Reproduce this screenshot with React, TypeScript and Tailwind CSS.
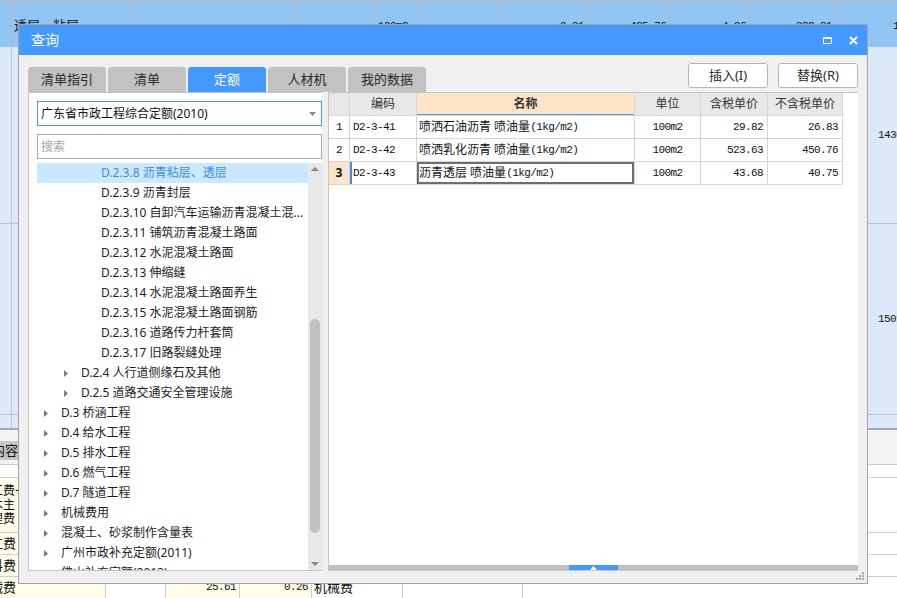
import React from "react";

const UI = "font-['Noto_Sans','Noto_Sans_CJK_SC',sans-serif]";
const MONO = "font-['Liberation_Mono','Noto_Sans_CJK_SC',monospace] text-[11px] tracking-[-0.6px]";

type Node = { lvl: 1 | 2 | 3; t: string; sel?: boolean };
const tree: Node[] = [
  { lvl: 3, t: "D.2.3.8 沥青粘层、透层", sel: true },
  { lvl: 3, t: "D.2.3.9 沥青封层" },
  { lvl: 3, t: "D.2.3.10 自卸汽车运输沥青混凝土混..." },
  { lvl: 3, t: "D.2.3.11 铺筑沥青混凝土路面" },
  { lvl: 3, t: "D.2.3.12 水泥混凝土路面" },
  { lvl: 3, t: "D.2.3.13 伸缩缝" },
  { lvl: 3, t: "D.2.3.14 水泥混凝土路面养生" },
  { lvl: 3, t: "D.2.3.15 水泥混凝土路面钢筋" },
  { lvl: 3, t: "D.2.3.16 道路传力杆套筒" },
  { lvl: 3, t: "D.2.3.17 旧路裂缝处理" },
  { lvl: 2, t: "D.2.4 人行道侧缘石及其他" },
  { lvl: 2, t: "D.2.5 道路交通安全管理设施" },
  { lvl: 1, t: "D.3 桥涵工程" },
  { lvl: 1, t: "D.4 给水工程" },
  { lvl: 1, t: "D.5 排水工程" },
  { lvl: 1, t: "D.6 燃气工程" },
  { lvl: 1, t: "D.7 隧道工程" },
  { lvl: 1, t: "机械费用" },
  { lvl: 1, t: "混凝土、砂浆制作含量表" },
  { lvl: 1, t: "广州市政补充定额(2011)" },
  { lvl: 1, t: "佛山补充定额(2013)" },
];

const rows = [
  { n: "1", code: "D2-3-41", name: "喷洒石油沥青 喷油量", paren: "(1kg/m2)", unit: "100m2", p1: "29.82", p2: "26.83" },
  { n: "2", code: "D2-3-42", name: "喷洒乳化沥青 喷油量", paren: "(1kg/m2)", unit: "100m2", p1: "523.63", p2: "450.76" },
  { n: "3", code: "D2-3-43", name: "沥青透层 喷油量", paren: "(1kg/m2)", unit: "100m2", p1: "43.68", p2: "40.75" },
];

function Tri() {
  return (
    <svg width="4" height="7" viewBox="0 0 4 7">
      <path d="M0 0L4 3.5L0 7Z" fill="#7c7c7c" />
    </svg>
  );
}

function TreeRow({ n }: { n: Node }) {
  const pad = n.lvl === 1 ? "pl-[7px]" : n.lvl === 2 ? "pl-[27px]" : "pl-[64px]";
  return (
    <div
      className={`h-[20px] shrink-0 flex items-center whitespace-nowrap overflow-hidden ${pad} ${
        n.sel ? "bg-[#cce8ff] text-[#3a8ee6]" : "text-[#1e1e1e]"
      }`}
    >
      {n.lvl < 3 && (
        <span className="mr-[13px] flex items-center">
          <Tri />
        </span>
      )}
      <span className="text-[12px] leading-[20px]">{n.t}</span>
    </div>
  );
}

const GRID = "grid grid-cols-[21px_67px_218px_66px_67px_75px]";
const CELL = "h-[23px] border-r border-b border-[#d6d6d6] flex items-center overflow-hidden whitespace-nowrap";

function Background() {
  const topCell = "h-full border-r border-[#b7b7b7] flex items-center overflow-hidden whitespace-nowrap";
  return (
    <div className="flex flex-col w-full h-full text-[#111]">
      {/* top selected row */}
      <div className="h-[47px] shrink-0 bg-[#91c6f4] border-t border-[#b7b7b7] flex text-[13px]">
        <div className={`${topCell} w-[12px]`} />
        <div className={`${topCell} w-[121px] pl-[2px] pt-[4px]`}>透层，粘层</div>
        <div className={`${topCell} w-[162px]`} />
        <div className={`${topCell} w-[80px]`} />
        <div className={`${topCell} w-[47px] pl-[3px] pt-[4px]`}>
          <span className={MONO}>100m2</span>
        </div>
        <div className={`${topCell} w-[80px]`} />
        <div className={`${topCell} w-[86px] justify-end pr-[3px] pt-[4px]`}>
          <span className={MONO}>0.01</span>
        </div>
        <div className={`${topCell} w-[82px] justify-end pr-[3px] pt-[4px]`}>
          <span className={MONO}>425.76</span>
        </div>
        <div className={`${topCell} w-[80px] justify-end pr-[3px] pt-[4px]`}>
          <span className={MONO}>4.26</span>
        </div>
        <div className={`${topCell} w-[86px] justify-end pr-[3px] pt-[4px]`}>
          <span className={MONO}>382.81</span>
        </div>
        <div className="flex-1 flex items-center pl-[57px] pt-[4px] overflow-hidden whitespace-nowrap">
          <span className={MONO}>1430.12</span>
        </div>
      </div>
      {/* light blue rows */}
      <div className="bg-[#dce9fb] flex flex-col">
        <div className="h-[177px] border-b border-[#c3c3c3] flex">
          <div className="w-[12px] border-r border-[#c3c3c3]" />
          <div className="flex-1" />
          <div className="w-[29px] flex items-center pl-[10px] overflow-hidden whitespace-nowrap">
            <span className={MONO}>1430.12</span>
          </div>
        </div>
        <div className="h-[191px] border-b border-[#c3c3c3] flex">
          <div className="w-[12px] border-r border-[#c3c3c3]" />
          <div className="flex-1" />
          <div className="w-[29px] flex items-center pl-[10px] overflow-hidden whitespace-nowrap">
            <span className={MONO}>1501.35</span>
          </div>
        </div>
        <div className="h-[13px] flex">
          <div className="w-[12px] border-r border-[#c3c3c3]" />
        </div>
      </div>
      {/* lower table */}
      <div className="h-[2px] bg-[#a8a8a8]" />
      <div className="h-[35px] bg-[#f3f3f3] border-b border-[#c8c8c8] flex items-start pt-[11px]">
        <div className="w-[18px] h-[19px] bg-[#c6c6c6] overflow-hidden flex justify-end items-center">
          <span className="whitespace-nowrap text-[13px]">内容</span>
        </div>
      </div>
      <div className="h-[13px] flex border-b border-[#d0d0d0] bg-white" />
      <div className="h-[55px] flex">
        <div className="w-[106px] bg-[#fffde8] border-r border-b border-[#cfcfcf] overflow-hidden flex flex-col justify-center text-[12px] leading-[14px]">
          <span className="-ml-[21px] whitespace-nowrap">人工费+</span>
          <span className="-ml-[21px] whitespace-nowrap">材木主</span>
          <span className="-ml-[21px] whitespace-nowrap">管理费</span>
        </div>
        <div className="flex-1 border-b border-[#cfcfcf] bg-white" />
      </div>
      <div className="h-[22px] flex">
        <div className="w-[106px] bg-[#fffde8] border-r border-b border-[#cfcfcf] overflow-hidden flex items-center text-[13px]">
          <span className="-ml-[23px] whitespace-nowrap">人工费</span>
        </div>
        <div className="flex-1 border-b border-[#cfcfcf] bg-white" />
      </div>
      <div className="h-[22px] flex">
        <div className="w-[106px] bg-[#fffde8] border-r border-b border-[#cfcfcf] overflow-hidden flex items-center text-[13px]">
          <span className="-ml-[23px] whitespace-nowrap">材料费</span>
        </div>
        <div className="flex-1 border-b border-[#cfcfcf] bg-white" />
      </div>
      <div className="h-[21px] flex text-[13px]">
        <div className="w-[106px] bg-[#fffde8] border-r border-[#cfcfcf] overflow-hidden flex items-center">
          <span className="-ml-[23px] whitespace-nowrap">机械费</span>
        </div>
        <div className="w-[60px] border-r border-[#cfcfcf] bg-white" />
        <div className="w-[74px] bg-[#fffde8] border-r border-[#cfcfcf] flex items-center justify-end pr-[3px]">
          <span className={MONO}>25.61</span>
        </div>
        <div className="w-[72px] bg-[#fffde8] border-r border-[#cfcfcf] flex items-center justify-end pr-[3px]">
          <span className={MONO}>0.26</span>
        </div>
        <div className="w-[91px] border-r border-[#cfcfcf] bg-white flex items-center pl-[2px]">机械费</div>
        <div className="w-[120px] border-r border-[#cfcfcf] bg-white" />
        <div className="flex-1 bg-white" />
      </div>
    </div>
  );
}

function Dialog() {
  const tabs = ["清单指引", "清单", "定额", "人材机", "我的数据"];
  return (
    <div className="absolute left-[18px] top-[24px] w-[850px] h-[560px] border border-[#a3a3a3] bg-[#f0f0f0] flex flex-col">
      {/* title bar */}
      <div className="h-[30px] shrink-0 bg-[#4499ff] flex items-center pl-[12px] pr-[9px]">
        <span className="text-white text-[14px] leading-none">查询</span>
        <div className="flex-1" />
        <div className="w-[9px] h-[7px] border-[1.5px] border-t-[2.5px] border-white" />
        <svg className="ml-[17px]" width="9" height="9" viewBox="0 0 9 9">
          <path d="M1 1L8 8M8 1L1 8" stroke="white" strokeWidth="2" />
        </svg>
      </div>
      {/* body */}
      <div className="flex-1 min-h-0 overflow-hidden flex flex-col px-[9px] pt-[8px] pb-[12px]">
        <div className="h-[29px] shrink-0 flex">
          <div className="flex gap-[2px] self-end">
            {tabs.map((t) => (
              <div
                key={t}
                className={`w-[78px] h-[25px] rounded-t-[3px] flex items-center justify-center text-[13px] ${
                  t === "定额" ? "bg-[#4499ff] text-white" : "bg-[#c2c2c2] text-[#2a2a2a]"
                }`}
              >
                {t}
              </div>
            ))}
          </div>
          <div className="flex-1" />
          <div className="flex gap-[10px] items-start">
            <div className="w-[80px] h-[25px] bg-white border border-[#b6b6b6] rounded-[3px] flex items-center justify-center text-[13px] text-[#2a2a2a]">
              插入(I)
            </div>
            <div className="w-[80px] h-[25px] bg-white border border-[#b6b6b6] rounded-[3px] flex items-center justify-center text-[13px] text-[#2a2a2a]">
              替换(R)
            </div>
          </div>
        </div>
        <div className="flex-1 flex gap-[6px] min-h-0">
          {/* left panel */}
          <div className="w-[294px] shrink-0 bg-white border-l border-t border-b border-[#c6c6c6] flex flex-col pl-[8px] pt-[8px] min-h-0">
            <div className="h-[25px] shrink-0 border border-[#4499ff] flex items-center pl-[3px] pr-[5px] text-[12px] text-[#111]">
              <span className="flex-1 whitespace-nowrap">广东省市政工程综合定额(2010)</span>
              <svg width="7" height="4" viewBox="0 0 7 4">
                <path d="M0 0H7L3.5 4Z" fill="#8a8a8a" />
              </svg>
            </div>
            <div className="h-[25px] shrink-0 mt-[8px] border border-[#ababab] flex items-center pl-[3px] text-[12px] text-[#a5a5a5]">
              搜索
            </div>
            <div className="flex-1 mt-[4px] flex min-h-0">
              <div className="flex-1 flex flex-col overflow-hidden min-h-0">
                {tree.map((n) => (
                  <TreeRow key={n.t} n={n} />
                ))}
              </div>
              <div className="w-[14px] shrink-0 bg-[#e8e8e8] flex flex-col">
                <div className="h-[12px] flex items-center justify-center">
                  <svg width="8" height="4" viewBox="0 0 8 4">
                    <path d="M0 4H8L4 0Z" fill="#858585" />
                  </svg>
                </div>
                <div className="flex-1 pt-[144px]">
                  <div className="h-[214px] mx-[2px] rounded-full bg-[#c1c1c1]" />
                </div>
                <div className="h-[12px] flex items-center justify-center">
                  <svg width="8" height="4" viewBox="0 0 8 4">
                    <path d="M0 0H8L4 4Z" fill="#858585" />
                  </svg>
                </div>
              </div>
            </div>
          </div>
          {/* right panel */}
          <div className="flex-1 bg-white border-l border-t border-b border-[#c6c6c6] flex flex-col min-h-0">
            <div className={`${GRID} text-[12px] text-[#111]`}>
              <div className={`${CELL} bg-[#e8e8e8]`} />
              <div className={`${CELL} bg-[#e8e8e8] justify-center text-[#333]`}>编码</div>
              <div className={`${CELL} bg-[#fde4c6] justify-center font-bold text-[#333] shadow-[inset_0_-1px_0_#4a9af5]`}>名称</div>
              <div className={`${CELL} bg-[#e8e8e8] justify-center text-[#333]`}>单位</div>
              <div className={`${CELL} bg-[#e8e8e8] justify-center text-[#333]`}>含税单价</div>
              <div className={`${CELL} bg-[#e8e8e8] justify-center text-[#333]`}>不含税单价</div>
              {rows.map((r) => {
                const cur = r.n === "3";
                return (
                  <React.Fragment key={r.n}>
                    <div className={`${CELL} justify-center ${cur ? "bg-[#fde4c6] font-bold" : ""}`}>
                      <span className={cur ? "text-[12px]" : MONO}>{r.n}</span>
                    </div>
                    <div className={`${CELL} pl-[3px] ${cur ? "shadow-[inset_2px_0_0_#3c8fe9]" : ""}`}>
                      <span className={MONO}>{r.code}</span>
                    </div>
                    <div className={`${CELL} pl-[2px] ${cur ? "shadow-[inset_0_0_0_2px_#6e6e6e]" : ""}`}>
                      <span>{r.name}</span>
                      <span className={MONO}>{r.paren}</span>
                    </div>
                    <div className={`${CELL} justify-center`}>
                      <span className={MONO}>{r.unit}</span>
                    </div>
                    <div className={`${CELL} justify-end pr-[4px]`}>
                      <span className={MONO}>{r.p1}</span>
                    </div>
                    <div className={`${CELL} justify-end pr-[4px]`}>
                      <span className={MONO}>{r.p2}</span>
                    </div>
                  </React.Fragment>
                );
              })}
            </div>
            <div className="flex-1" />
            <div className="h-[5px] shrink-0 bg-[#c0c0c0] flex justify-center">
              <div className="w-[49px] h-full bg-[#4499ff] flex items-center justify-center">
                <svg width="7" height="4" viewBox="0 0 7 4">
                  <path d="M0 4H7L3.5 0Z" fill="white" />
                </svg>
              </div>
            </div>
          </div>
        </div>
      </div>
      {/* resize grip */}
      <div className="absolute right-[3px] bottom-[3px] w-[8px] h-[8px]">
        <svg width="8" height="8" viewBox="0 0 8 8">
          <rect x="6" y="0" width="2" height="2" fill="#a6a6a6" />
          <rect x="3" y="3" width="2" height="2" fill="#a6a6a6" />
          <rect x="6" y="3" width="2" height="2" fill="#a6a6a6" />
          <rect x="0" y="6" width="2" height="2" fill="#a6a6a6" />
          <rect x="3" y="6" width="2" height="2" fill="#a6a6a6" />
          <rect x="6" y="6" width="2" height="2" fill="#a6a6a6" />
        </svg>
      </div>
    </div>
  );
}

export default function App() {
  return (
    <div className={`relative w-[897px] h-[598px] overflow-hidden bg-white ${UI}`}>
      <Background />
      <Dialog />
    </div>
  );
}
